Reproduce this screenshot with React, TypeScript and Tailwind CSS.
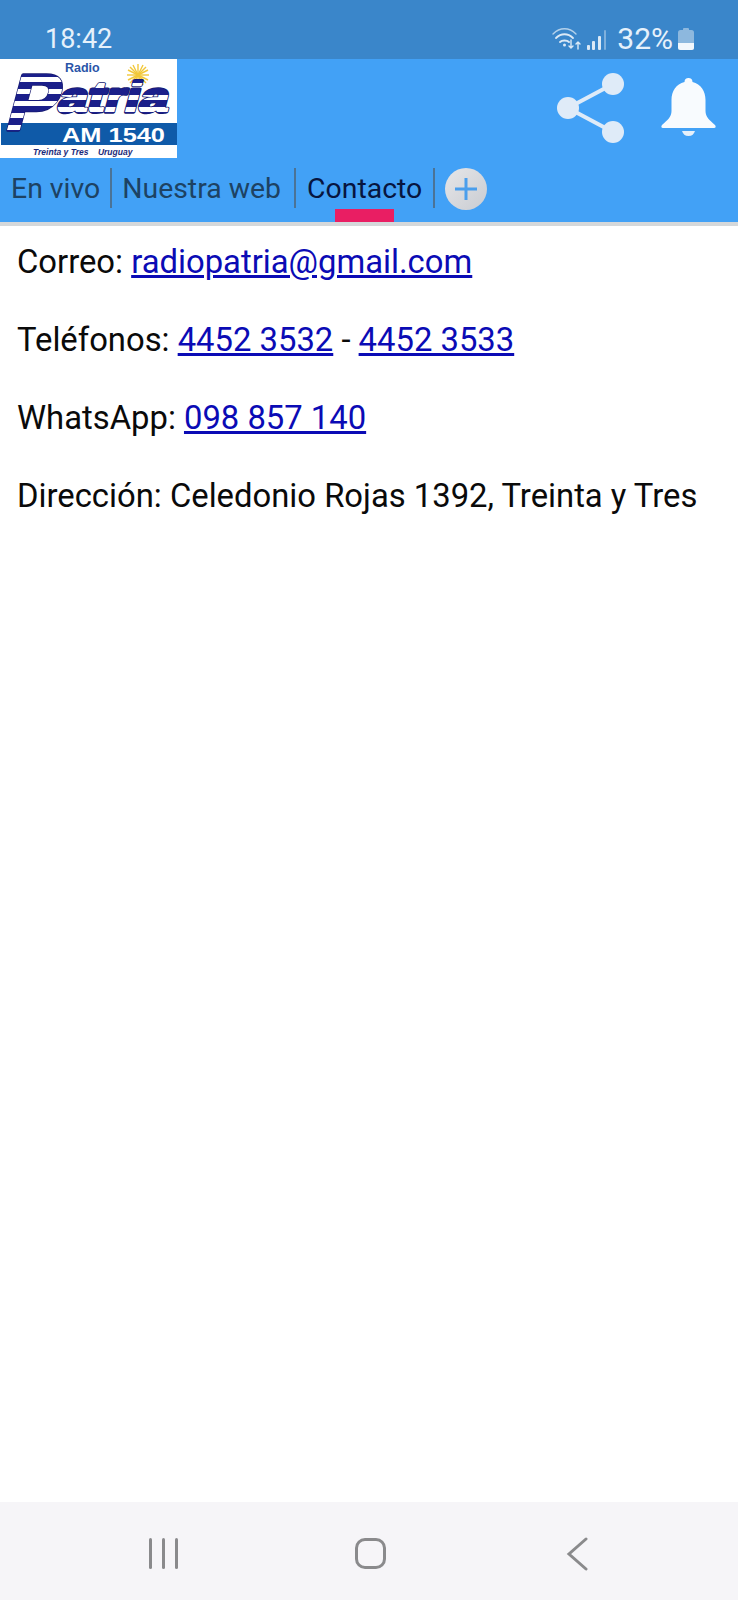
import React from "react";

function Logo() {
  return (
    <svg width="177" height="99" viewBox="0 0 177 99" className="block shrink-0">
      <defs>
        <linearGradient id="st" gradientUnits="userSpaceOnUse" x1="0" y1="12" x2="0" y2="24" spreadMethod="repeat">
          <stop offset="0" stopColor="#1b1f8a" /><stop offset="0.55" stopColor="#1b1f8a" />
          <stop offset="0.55" stopColor="#ffffff" /><stop offset="1" stopColor="#ffffff" />
        </linearGradient>
      </defs>
      <rect width="177" height="99" fill="#fff" />
      <text x="65" y="13" fontFamily="Liberation Sans" fontWeight="700" fontSize="12.500" fill="#2a55a8">Radio</text>
      <g stroke="#f2c83a" strokeWidth="1.4">
        <line x1="138" y1="5" x2="138" y2="27" /><line x1="127" y1="16" x2="149" y2="16" />
        <line x1="130" y1="8" x2="146" y2="24" /><line x1="146" y1="8" x2="130" y2="24" />
        <line x1="133" y1="6" x2="143" y2="26" /><line x1="143" y1="6" x2="133" y2="26" />
        <line x1="128" y1="11" x2="148" y2="21" /><line x1="148" y1="11" x2="128" y2="21" />
      </g>
      <rect x="1" y="64" width="176" height="22" fill="#0f5aa8" />
      <text x="62" y="83" fontFamily="Liberation Sans" fontWeight="700" fontSize="21" textLength="103" lengthAdjust="spacingAndGlyphs" fill="#fff">AM 1540</text>
      <g fontFamily="Liberation Sans" fontWeight="700" strokeLinejoin="round">
        <text transform="translate(3 71) skewX(-15)" fontSize="80" textLength="50" lengthAdjust="spacingAndGlyphs" fill="#14176e" stroke="#14176e" strokeWidth="3.500">P</text>
        <text transform="translate(3 71) skewX(-15)" fontSize="80" textLength="50" lengthAdjust="spacingAndGlyphs" fill="url(#st)" stroke="url(#st)" strokeWidth="2">P</text>
        <text transform="translate(56 53) skewX(-15)" fontSize="43" textLength="110" lengthAdjust="spacingAndGlyphs" fill="#14176e" stroke="#14176e" strokeWidth="3.500">atria</text>
        <text transform="translate(56 53) skewX(-15)" fontSize="43" textLength="110" lengthAdjust="spacingAndGlyphs" fill="url(#st)" stroke="url(#st)" strokeWidth="2">atria</text>
      </g>
      <text x="33" y="96" fontFamily="Liberation Sans" fontStyle="italic" fontWeight="700" fontSize="8.500" fill="#1b2a7a" xmlSpace="preserve">Treinta y Tres    Uruguay</text>
    </svg>
  );
}

function StatusIcons() {
  return (
    <div className="flex items-center">
      <svg width="30" height="24" viewBox="0 0 30 24" fill="none" stroke="#dbe9f6" strokeLinecap="round">
        <path d="M1 7C8 0 17 0 24 7" strokeWidth="1.4" opacity="0.75" />
        <path d="M4 11C9 6 16 6 21 11" strokeWidth="1.8" />
        <path d="M8 15C10 13 15 13 17 15" strokeWidth="1.8" />
        <circle cx="12.500" cy="18" r="1.500" fill="#dbe9f6" stroke="none" />
        <path d="M19 13V21M17 19l2 2 2-2" strokeWidth="1.400" />
        <path d="M26 22V15M24 17l2-2 2 2" strokeWidth="1.400" />
      </svg>
      <svg width="20" height="24" viewBox="0 0 20 24" className="ml-[5px]">
        <rect x="0" y="18" width="3" height="5" rx="1" fill="#dbe9f6" />
        <rect x="5" y="14" width="3" height="9" rx="1" fill="#dbe9f6" />
        <rect x="11" y="9" width="3" height="14" rx="1" fill="#dbe9f6" />
        <rect x="17" y="3" width="2" height="20" rx="1" fill="#7fb0dc" />
      </svg>
    </div>
  );
}

function Battery() {
  return (
    <svg width="16" height="22" viewBox="0 0 16 22">
      <rect x="5" y="0" width="6" height="3" rx="1" fill="#8db8de" />
      <rect x="0" y="2" width="16" height="20" rx="2.500" fill="#8db8de" />
      <path d="M0 15h16v4.500a2.500 2.500 0 0 1-2.500 2.500h-11A2.500 2.500 0 0 1 0 19.500z" fill="#f2f7fc" />
    </svg>
  );
}

function Share() {
  return (
    <svg width="68" height="70" viewBox="0 0 68 70" className="block">
      <path d="M56 11L11 35L56 59" fill="none" stroke="#dfebf8" strokeWidth="4" />
      <circle cx="56" cy="11" r="11" fill="#dfebf8" />
      <circle cx="11" cy="35" r="11" fill="#dfebf8" />
      <circle cx="56" cy="59" r="11" fill="#dfebf8" />
    </svg>
  );
}

function Bell() {
  return (
    <svg width="55" height="60" viewBox="0 0 55 60" className="block">
      <path d="M27.500 0c2.500 0 4 1.500 4 4c8.500 2 13 9 13 18v11c0 6 4 9 9.500 14c1 1 1 3-1 3H2c-2 0-2-2-1-3c5.500-5 9.500-8 9.500-14V22c0-9 4.500-16 13-18C23.500 1.500 25 0 27.500 0z" fill="#f8fbfe" />
      <path d="M21 53h13c-1 3-3 5-6.500 5s-5.500-2-6.500-5z" fill="#e6f0fa" />
    </svg>
  );
}

function Sep() {
  return <div className="w-[2px] h-[40px] bg-[#4b7396] shrink-0" />;
}

function A({ children }: { children: React.ReactNode }) {
  return <a href="#" className="text-[#0b0bb5] underline">{children}</a>;
}

export default function App() {
  return (
    <div className="w-[738px] h-[1600px] flex flex-col bg-white overflow-hidden font-['Roboto',sans-serif]">
      <div className="h-[59px] shrink-0 bg-[#3a86ca] flex items-center justify-between pl-[45px] pr-[44px] pt-[19px] text-[#e6f1fb] text-[27px]">
        <span className="leading-none">18:42</span>
        <div className="flex items-center gap-[10px]">
          <StatusIcons />
          <span className="leading-none text-[30px] -mr-[5px]">32%</span>
          <Battery />
        </div>
      </div>
      <div className="h-[167px] shrink-0 bg-[#42a1f6] flex flex-col border-b-[4px] border-[#d5d8da]">
        <div className="flex justify-between h-[99px]">
          <Logo />
          <div className="flex items-start gap-[36px] pr-[22px] pt-[14px]">
            <Share />
            <div className="pt-[5px]"><Bell /></div>
          </div>
        </div>
        <div className="flex items-start pt-[10px] h-[64px] text-[28.400px] text-[#1d4263]">
          <span className="pl-[11px] pr-[10px] leading-[42px]">En vivo</span>
          <Sep />
          <span className="pl-[10px] pr-[13px] leading-[42px]">Nuestra web</span>
          <Sep />
          <div className="relative px-[11px] leading-[42px] text-[#07153f]">
            <span>Contacto</span>
            <div className="absolute left-[39px] top-[41px] w-[59px] h-[13px] bg-[#e91e63]" />
          </div>
          <Sep />
          <div className="ml-[10px] w-[42px] h-[42px] rounded-full bg-gradient-to-br from-[#e6e6e8] to-[#c9ccd2] flex items-center justify-center">
            <svg width="28" height="28" viewBox="0 0 28 28" stroke="#4a9eec" strokeWidth="3">
              <path d="M14 3V25M3 14H25" />
            </svg>
          </div>
        </div>
      </div>
      <div className="flex-1 px-[17px] pt-[16px] text-[32.800px] leading-[40px] text-[#0a0a0a] flex flex-col gap-[38px]">
        <p>Correo: <A>radiopatria@gmail.com</A></p>
        <p>Teléfonos: <A>4452 3532</A> - <A>4452 3533</A></p>
        <p>WhatsApp: <A>098 857 140</A></p>
        <p>Dirección: Celedonio Rojas 1392, Treinta y Tres</p>
      </div>
      <div className="h-[98px] shrink-0 bg-[#f6f5f8] relative">
        <div className="absolute left-[149px] top-[36px] flex gap-[10px]">
          <div className="w-[3px] h-[31px] rounded bg-[#8a8a8c]" />
          <div className="w-[3px] h-[31px] rounded bg-[#8a8a8c]" />
          <div className="w-[3px] h-[31px] rounded bg-[#8a8a8c]" />
        </div>
        <div className="absolute left-[355px] top-[36px] w-[31px] h-[31px] rounded-[10px] border-[3px] border-[#8a8a8c]" />
        <svg className="absolute left-[566px] top-[35px]" width="24" height="34" viewBox="0 0 24 34" fill="none" stroke="#8a8a8c" strokeWidth="3" strokeLinecap="round">
          <path d="M20 2L3 17L20 32" />
        </svg>
      </div>
    </div>
  );
}
